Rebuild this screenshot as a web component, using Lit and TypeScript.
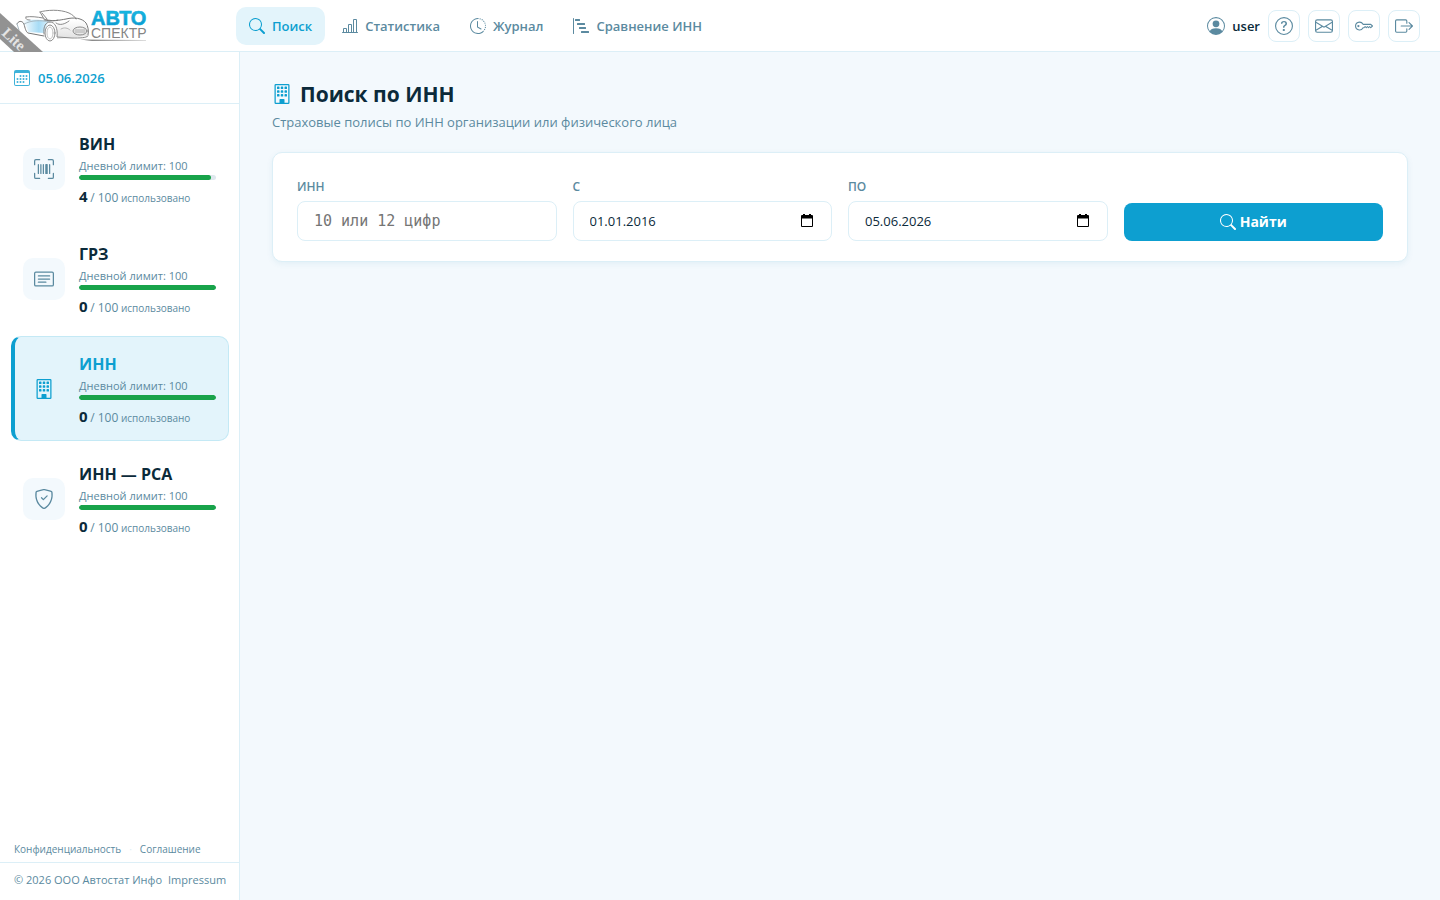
import { LitElement, html, css, svg } from "lit";
import { customElement, property } from "lit/decorators.js";

const windows = [2, 5, 8]
  .flatMap((y) => [4, 7, 10].map((x) => `M${x} ${y + 0.5}a.5.5 0 0 1 .5-.5h1a.5.5 0 0 1 .5.5v1a.5.5 0 0 1-.5.5h-1a.5.5 0 0 1-.5-.5z`))
  .join("");

const ICONS: Record<string, string[]> = {
  search: ["M11.742 10.344a6.5 6.5 0 1 0-1.397 1.398h-.001q.044.06.098.115l3.85 3.85a1 1 0 0 0 1.415-1.414l-3.85-3.85a1 1 0 0 0-.115-.1zM12 6.5a5.5 5.5 0 1 1-11 0 5.5 5.5 0 0 1 11 0"],
  chart: ["M11 2a1 1 0 0 1 1-1h2a1 1 0 0 1 1 1v12h.5a.5.5 0 0 1 0 1H.5a.5.5 0 0 1 0-1H1v-3a1 1 0 0 1 1-1h2a1 1 0 0 1 1 1v3h1V7a1 1 0 0 1 1-1h2a1 1 0 0 1 1 1v7h1zm1 12h2V2h-2zm-3 0V7H7v7zm-5 0v-3H2v3z"],
  history: [
    "M8.515 1.019A7 7 0 0 0 8 1V0a8 8 0 0 1 .589.022zm2.004.45a7 7 0 0 0-.985-.299l.219-.976q.576.129 1.126.342zm1.37.71a7 7 0 0 0-.439-.27l.493-.87a8 8 0 0 1 .979.654l-.615.789a7 7 0 0 0-.418-.302zm1.834 1.79a7 7 0 0 0-.653-.796l.724-.69q.406.429.747.91zm.744 1.352a7 7 0 0 0-.214-.468l.893-.45a8 8 0 0 1 .45 1.088l-.95.313a7 7 0 0 0-.179-.483m.53 2.507a7 7 0 0 0-.1-1.025l.985-.17q.1.58.116 1.17zm-.131 1.538q.05-.254.081-.51l.993.123a8 8 0 0 1-.23 1.155l-.964-.267q.069-.247.12-.501m-.952 2.379q.276-.436.486-.908l.914.405q-.24.54-.555 1.038zm-.964 1.205q.183-.183.35-.378l.758.653a8 8 0 0 1-.401.432z",
    "M8 1a7 7 0 1 0 4.95 11.95l.707.707A8.001 8.001 0 1 1 8 0z",
    "M7.5 3a.5.5 0 0 1 .5.5v5.21l3.248 1.856a.5.5 0 0 1-.496.868l-3.5-2A.5.5 0 0 1 7 9V3.5a.5.5 0 0 1 .5-.5",
  ],
  steps: ["M.5 0a.5.5 0 0 1 .5.5v15a.5.5 0 0 1-1 0V.5A.5.5 0 0 1 .5 0M2 1.5a.5.5 0 0 1 .5-.5h4a.5.5 0 0 1 .5.5v1a.5.5 0 0 1-.5.5h-4a.5.5 0 0 1-.5-.5zm2 4a.5.5 0 0 1 .5-.5h7a.5.5 0 0 1 .5.5v1a.5.5 0 0 1-.5.5h-7a.5.5 0 0 1-.5-.5zm2 4a.5.5 0 0 1 .5-.5h6a.5.5 0 0 1 .5.5v1a.5.5 0 0 1-.5.5h-6a.5.5 0 0 1-.5-.5zm2 4a.5.5 0 0 1 .5-.5h7a.5.5 0 0 1 .5.5v1a.5.5 0 0 1-.5.5h-7a.5.5 0 0 1-.5-.5z"],
  person: [
    "M11 6a3 3 0 1 1-6 0 3 3 0 0 1 6 0",
    "M0 8a8 8 0 1 1 16 0A8 8 0 0 1 0 8m8-7a7 7 0 0 0-5.468 11.37C3.242 11.226 4.805 10 8 10s4.757 1.225 5.468 2.37A7 7 0 0 0 8 1",
  ],
  question: [
    "M8 15A7 7 0 1 1 8 1a7 7 0 0 1 0 14m0 1A8 8 0 1 0 8 0a8 8 0 0 0 0 16",
    "M5.255 5.786a.237.237 0 0 0 .241.247h.825c.138 0 .248-.113.266-.25.09-.656.54-1.134 1.342-1.134.686 0 1.314.343 1.314 1.168 0 .635-.374.927-.965 1.371-.673.489-1.206 1.06-1.168 1.987l.003.217a.25.25 0 0 0 .25.246h.811a.25.25 0 0 0 .25-.25v-.105c0-.718.273-.927 1.01-1.486.609-.463 1.244-.977 1.244-2.056 0-1.511-1.276-2.241-2.673-2.241-1.267 0-2.655.59-2.75 2.286m1.557 5.763c0 .533.425.927 1.01.927.609 0 1.028-.394 1.028-.927 0-.552-.42-.94-1.029-.94-.584 0-1.009.388-1.009.94",
  ],
  envelope: ["M0 4a2 2 0 0 1 2-2h12a2 2 0 0 1 2 2v8a2 2 0 0 1-2 2H2a2 2 0 0 1-2-2zm2-1a1 1 0 0 0-1 1v.217l7 4.2 7-4.2V4a1 1 0 0 0-1-1zm13 2.383-4.708 2.825L15 11.105zm-.034 6.876-5.64-3.471L8 9.583l-1.326-.795-5.64 3.47A1 1 0 0 0 2 13h12a1 1 0 0 0 .966-.741M1 11.105l4.708-2.897L1 5.383z"],
  key: [
    "M0 8a4 4 0 0 1 7.465-2H14a.5.5 0 0 1 .354.146l1.5 1.5a.5.5 0 0 1 0 .708l-1.5 1.5a.5.5 0 0 1-.708 0L13 9.207l-.646.647a.5.5 0 0 1-.708 0L11 9.207l-.646.647a.5.5 0 0 1-.708 0L9 9.207l-.646.647A.5.5 0 0 1 8 10h-.535A4 4 0 0 1 0 8m4-3a3 3 0 1 0 2.712 4.285A.5.5 0 0 1 7.163 9h.63l.853-.854a.5.5 0 0 1 .708 0l.646.647.646-.647a.5.5 0 0 1 .708 0l.646.647.646-.647a.5.5 0 0 1 .708 0l.646.647.793-.793-1-1h-6.63a.5.5 0 0 1-.451-.285A3 3 0 0 0 4 5",
    "M4 8a1 1 0 1 1-2 0 1 1 0 0 1 2 0",
  ],
  exit: [
    "M10 12.5a.5.5 0 0 1-.5.5h-8a.5.5 0 0 1-.5-.5v-9a.5.5 0 0 1 .5-.5h8a.5.5 0 0 1 .5.5v2a.5.5 0 0 0 1 0v-2A1.5 1.5 0 0 0 9.5 2h-8A1.5 1.5 0 0 0 0 3.5v9A1.5 1.5 0 0 0 1.5 14h8a1.5 1.5 0 0 0 1.5-1.5v-2a.5.5 0 0 0-1 0z",
    "M15.854 8.354a.5.5 0 0 0 0-.708l-3-3a.5.5 0 0 0-.708.708L14.293 7.5H5.5a.5.5 0 0 0 0 1h8.793l-2.147 2.146a.5.5 0 0 0 .708.708z",
  ],
  calendar: [
    "M14 0H2a2 2 0 0 0-2 2v12a2 2 0 0 0 2 2h12a2 2 0 0 0 2-2V2a2 2 0 0 0-2-2M1 3.857C1 3.384 1.448 3 2 3h12c.552 0 1 .384 1 .857v10.286c0 .473-.448.857-1 .857H2c-.552 0-1-.384-1-.857z",
    "M6.5 7a1 1 0 1 0 0-2 1 1 0 0 0 0 2m3 0a1 1 0 1 0 0-2 1 1 0 0 0 0 2m3 0a1 1 0 1 0 0-2 1 1 0 0 0 0 2m-9 3a1 1 0 1 0 0-2 1 1 0 0 0 0 2m3 0a1 1 0 1 0 0-2 1 1 0 0 0 0 2m3 0a1 1 0 1 0 0-2 1 1 0 0 0 0 2m3 0a1 1 0 1 0 0-2 1 1 0 0 0 0 2m-9 3a1 1 0 1 0 0-2 1 1 0 0 0 0 2m3 0a1 1 0 1 0 0-2 1 1 0 0 0 0 2m3 0a1 1 0 1 0 0-2 1 1 0 0 0 0 2",
  ],
  barcode: ["M1.5 1a.5.5 0 0 0-.5.5v3a.5.5 0 0 1-1 0v-3A1.5 1.5 0 0 1 1.5 0h3a.5.5 0 0 1 0 1zM11 .5a.5.5 0 0 1 .5-.5h3A1.5 1.5 0 0 1 16 1.5v3a.5.5 0 0 1-1 0v-3a.5.5 0 0 0-.5-.5h-3a.5.5 0 0 1-.5-.5M.5 11a.5.5 0 0 1 .5.5v3a.5.5 0 0 0 .5.5h3a.5.5 0 0 1 0 1h-3A1.5 1.5 0 0 1 0 14.5v-3a.5.5 0 0 1 .5-.5m15 0a.5.5 0 0 1 .5.5v3a1.5 1.5 0 0 1-1.5 1.5h-3a.5.5 0 0 1 0-1h3a.5.5 0 0 0 .5-.5v-3a.5.5 0 0 1 .5-.5M3 4.5a.5.5 0 0 1 1 0v7a.5.5 0 0 1-1 0zm2 0a.5.5 0 0 1 1 0v7a.5.5 0 0 1-1 0zm2 0a.5.5 0 0 1 1 0v7a.5.5 0 0 1-1 0zm2 0a.5.5 0 0 1 .5-.5h1a.5.5 0 0 1 .5.5v7a.5.5 0 0 1-.5.5h-1a.5.5 0 0 1-.5-.5zm3 0a.5.5 0 0 1 1 0v7a.5.5 0 0 1-1 0z"],
  card: [
    "M14.5 3a.5.5 0 0 1 .5.5v9a.5.5 0 0 1-.5.5h-13a.5.5 0 0 1-.5-.5v-9a.5.5 0 0 1 .5-.5zm-13-1A1.5 1.5 0 0 0 0 3.5v9A1.5 1.5 0 0 0 1.5 14h13a1.5 1.5 0 0 0 1.5-1.5v-9A1.5 1.5 0 0 0 14.5 2z",
    "M3 5.5a.5.5 0 0 1 .5-.5h9a.5.5 0 0 1 0 1h-9a.5.5 0 0 1-.5-.5M3 8a.5.5 0 0 1 .5-.5h9a.5.5 0 0 1 0 1h-9A.5.5 0 0 1 3 8m0 2.5a.5.5 0 0 1 .5-.5h6a.5.5 0 0 1 0 1h-6a.5.5 0 0 1-.5-.5",
  ],
  building: ["M2 1a1 1 0 0 1 1-1h10a1 1 0 0 1 1 1v14a1 1 0 0 1-1 1H3a1 1 0 0 1-1-1zm11 0H3v14h3v-2.5a.5.5 0 0 1 .5-.5h3a.5.5 0 0 1 .5.5V15h3z", windows],
  shield: [
    "M5.338 1.59a61 61 0 0 0-2.837.856.48.48 0 0 0-.328.39c-.554 4.157.726 7.19 2.253 9.188a10.7 10.7 0 0 0 2.287 2.233c.346.244.652.42.893.533q.18.085.293.118a1 1 0 0 0 .101.025 1 1 0 0 0 .1-.025q.114-.034.294-.118c.24-.113.547-.29.893-.533a10.7 10.7 0 0 0 2.287-2.233c1.527-1.997 2.807-5.031 2.253-9.188a.48.48 0 0 0-.328-.39c-.651-.213-1.75-.56-2.837-.855C9.552 1.29 8.531 1.067 8 1.067c-.53 0-1.552.223-2.662.524zM5.072.56C6.157.265 7.31 0 8 0s1.843.265 2.928.56c1.11.3 2.229.655 2.887.87a1.54 1.54 0 0 1 1.044 1.262c.596 4.477-.787 7.795-2.465 9.99a11.8 11.8 0 0 1-2.517 2.453 7 7 0 0 1-1.048.625c-.28.132-.581.24-.829.24s-.548-.108-.829-.24a7 7 0 0 1-1.048-.625 11.8 11.8 0 0 1-2.517-2.453C1.928 10.487.545 7.169 1.141 2.692A1.54 1.54 0 0 1 2.185 1.43 63 63 0 0 1 5.072.56",
    "M10.854 5.146a.5.5 0 0 1 0 .708l-3 3a.5.5 0 0 1-.708 0l-1.5-1.5a.5.5 0 1 1 .708-.708L7.5 7.793l2.646-2.647a.5.5 0 0 1 .708 0",
  ],
  picker: ["M4 1h2v1h4V1h2v1h1a1 1 0 0 1 1 1v10a1 1 0 0 1-1 1H3a1 1 0 0 1-1-1V3a1 1 0 0 1 1-1h1zM3 5.500v7.500h10V5.500z"],
};

@customElement("ui-icon")
class UiIcon extends LitElement {
  @property() name = "";
  static styles = css`
    :host { display: inline-flex; flex: none; width: 16px; height: 16px; }
    svg { width: 100%; height: 100%; fill: currentColor; fill-rule: evenodd; }
  `;
  render() {
    return html`<svg viewBox="0 0 16 16" aria-hidden="true">${(ICONS[this.name] ?? []).map((d) => svg`<path d=${d}></path>`)}</svg>`;
  }
}

@customElement("brand-logo")
class BrandLogo extends LitElement {
  static styles = css`
    :host { display: block; width: 160px; height: 52px; }
    svg { display: block; width: 160px; height: 52px; }
    .name { font: bold 20px "Liberation Sans", sans-serif; }
    .sub { font: 14px "Liberation Sans", sans-serif; fill: #858585; }
    .lite { font: bold 15px "Liberation Serif", serif; fill: #e4e4e4; }
  `;
  render() {
    return html`<svg viewBox="0 0 160 52" role="img" aria-label="Автоспектр Lite">
      <defs>
        <linearGradient id="sky" x1="0" y1="0" x2="0" y2="1"><stop offset="0" stop-color="#19c0e6"></stop><stop offset="1" stop-color="#0a92cc"></stop></linearGradient>
        <linearGradient id="tint" x1="0" y1="0" x2="1" y2="0"><stop offset="0" stop-color="#ffffff"></stop><stop offset=".6" stop-color="#a6dbf5"></stop><stop offset="1" stop-color="#e4f4fc"></stop></linearGradient>
        <linearGradient id="metal" x1="0" y1="0" x2="0" y2="1"><stop offset="0" stop-color="#ffffff"></stop><stop offset="1" stop-color="#e0e0e0"></stop></linearGradient>
        <linearGradient id="swoosh" x1="0" y1="0" x2="1" y2="0"><stop offset="0" stop-color="#777777"></stop><stop offset="1" stop-color="#dddddd"></stop></linearGradient>
      </defs>
      <path d="M22 21C30 19 40 20 50 21C47 23 45 28 44 33L28 32C27 27 25 23 22 21z" fill="url(#tint)"></path>
      <path d="M57 24C66 20 78 18 84 22L88 29 87 36 57 39z" fill="url(#metal)"></path>
      <g fill="none" stroke="#8b8b8b" stroke-linecap="round">
        <path d="M40 12C46 10 60 9 69 13C73 15 75 17 76 19"></path>
        <path d="M40 12L44 19C50 21 55 21 58 20M42 13L47 19"></path>
        <path d="M26 17C31 16 37 17 43 18M26 17C25 19 27 20 30 20"></path>
        <path d="M44 20C52 22 60 20 66 19C74 17 82 18 86 23C88 26 89 31 88 35" stroke="#777777"></path>
        <path d="M56 23C60 26 65 24 69 21"></path>
        <path d="M17 24C18 21 22 20 24 24C25 28 26 32 28 33L44 36" stroke="#777777"></path>
        <path d="M17 24L19 30M24 24C32 20 40 20 50 22" stroke="#a9b9c2"></path>
        <path d="M44 34C43 26 46 22 50 22C55 22 58 28 57 37L72 38C80 38 86 38 88 36"></path>
        <ellipse cx="50" cy="33" rx="5" ry="8"></ellipse>
        <ellipse cx="50" cy="33" rx="3" ry="6" stroke="#c4c4c4"></ellipse>
        <ellipse cx="80" cy="31" rx="7" ry="4"></ellipse>
        <path d="M75 30H85M75 32H85" stroke="#aaaaaa"></path>
        <path d="M61 29C64 27 68 28 70 30" stroke="#b5b5b5"></path>
      </g>
      <path d="M80 39.500L146 40 146 41 92 41z" fill="url(#swoosh)"></path>
      <text class="name" x="91" y="25" fill="url(#sky)" stroke="#12a9d8" stroke-width=".6">АВТО</text>
      <text class="sub" x="91" y="38">СПЕКТР</text>
      <path d="M0 13L43 52H14L0 39z" fill="#929292"></path>
      <text class="lite" transform="translate(1 34) rotate(43)">Lite</text>
    </svg>`;
  }
}

const NAV = [
  { icon: "search", label: "Поиск", active: true },
  { icon: "chart", label: "Статистика" },
  { icon: "history", label: "Журнал" },
  { icon: "steps", label: "Сравнение ИНН" },
];
const ACTIONS = [
  { icon: "question", label: "Помощь" },
  { icon: "envelope", label: "Сообщения" },
  { icon: "key", label: "Сменить пароль" },
  { icon: "exit", label: "Выйти" },
];
const MODES = [
  { icon: "barcode", title: "ВИН", used: 4 },
  { icon: "card", title: "ГРЗ", used: 0 },
  { icon: "building", title: "ИНН", used: 0, active: true },
  { icon: "shield", title: "ИНН — РСА", used: 0 },
];
const LIMIT = 100;

@customElement("app-root")
class AppRoot extends LitElement {
  static styles = css`
    :host {
      --accent: #0d9fd0; --ink: #0b2a3a; --muted: #5b8aa0; --line: #dceff7; --soft: #e3f4fb; --page: #f3f9fd;
      display: grid; grid-template-rows: 52px 1fr; min-height: 100vh;
      background: var(--page); color: var(--ink);
      font: 14px/20px "Open Sans", "Noto Sans", sans-serif;
    }
    * { box-sizing: border-box; }
    a { color: inherit; text-decoration: none; }
    h1, p { margin: 0; }
    header { display: flex; align-items: center; background: #fff; border-bottom: 1px solid var(--line); padding-right: 20px; }
    .brand { width: 236px; height: 52px; }
    nav { display: flex; gap: 4px; }
    .tab { display: flex; align-items: center; gap: 7px; height: 38px; padding: 0 13px; border-radius: 10px; color: var(--muted); font-size: 13px; font-weight: 600; }
    .tab.active { background: var(--soft); color: var(--accent); }
    .tools { display: flex; align-items: center; gap: 8px; margin-left: auto; color: var(--muted); }
    .tools ui-icon { width: 18px; height: 18px; }
    .user { display: flex; align-items: center; gap: 7px; color: var(--ink); font-size: 13px; font-weight: 600; }
    .user ui-icon { color: var(--muted); }
    .tool { display: grid; place-items: center; width: 32px; height: 32px; padding: 0; border: 1px solid var(--line); border-radius: 8px; background: #fff; color: var(--muted); }
    .body { display: grid; grid-template-columns: 240px 1fr; }
    aside { display: flex; flex-direction: column; background: #fff; border-right: 1px solid var(--line); }
    .date { display: flex; align-items: center; gap: 8px; height: 52px; padding: 0 14px; border-bottom: 1px solid var(--line); color: var(--accent); font-size: 13px; font-weight: 600; }
    .date ui-icon { opacity: .8; }
    .modes { display: flex; flex-direction: column; gap: 5px; padding: 12px 10px 0 11px; }
    .mode { display: grid; grid-template-columns: 42px 1fr; align-items: center; gap: 14px; height: 105px; padding: 0 12px 0 8px; border: 1px solid transparent; border-left: 4px solid transparent; border-radius: 10px; }
    .mode.active { background: var(--soft); border-color: #c4e9f5; border-left-color: var(--accent); }
    .badge { display: grid; place-items: center; width: 42px; height: 42px; border-radius: 10px; background: var(--page); color: var(--muted); }
    .badge ui-icon { width: 20px; height: 20px; }
    .active .badge { background: none; color: var(--accent); }
    .info { padding-top: 5px; }
    .title { font-size: 16px; line-height: 24px; font-weight: 700; }
    .active .title { color: var(--accent); }
    .limit { font-size: 11px; line-height: 19px; color: var(--muted); }
    .track { height: 5px; border-radius: 3px; background: #dfe8ee; overflow: hidden; }
    .fill { height: 5px; border-radius: 3px; background: #18a34a; }
    .usage { margin-top: 4px; line-height: 24px; font-size: 10px; color: var(--muted); }
    .usage b { font-size: 15px; color: var(--ink); }
    .usage span { font-size: 12px; font-weight: 500; }
    .legal { display: flex; gap: 8px; margin-top: auto; padding: 0 14px; height: 26px; line-height: 24px; border-bottom: 1px solid var(--line); font-size: 10px; color: var(--muted); }
    .dot { color: var(--line); }
    .copy { display: flex; gap: 6px; height: 37px; padding: 0 14px; line-height: 34px; font-size: 11px; color: var(--muted); white-space: nowrap; }
    main { padding: 28px 32px; }
    .head { display: flex; align-items: center; gap: 8px; }
    .head ui-icon { width: 20px; height: 20px; color: var(--accent); }
    h1 { font-size: 21px; line-height: 28px; font-weight: 700; }
    .lead { margin-top: 4px; font-size: 13px; color: var(--muted); }
    form { display: grid; grid-template-columns: repeat(4, 1fr); align-items: end; gap: 16px; margin-top: 20px; padding: 24px 24px 20px; border: 1px solid var(--line); border-radius: 10px; background: #fff; box-shadow: 0 2px 6px rgba(13, 120, 160, .07); }
    .field { display: grid; gap: 4px; }
    label { font-size: 12px; line-height: 20px; font-weight: 600; color: var(--muted); text-transform: uppercase; }
    .box { display: flex; align-items: center; height: 40px; padding: 0 16px; border: 1px solid var(--line); border-radius: 8px; background: #fff; }
    input { flex: 1; min-width: 0; padding: 0; border: 0; outline: 0; background: none; color: var(--ink); font: 13px/20px "Open Sans", "Noto Sans", sans-serif; }
    .mono { font: 15px/20px "DejaVu Sans Mono", monospace; }
    .mono::placeholder { color: #757575; opacity: 1; }
    .pick { display: grid; place-items: center; padding: 0; border: 0; background: none; color: #000; }
    .submit { display: flex; align-items: center; justify-content: center; gap: 4px; height: 38px; border: 0; border-radius: 8px; background: var(--accent); color: #fff; font: 700 14px/20px "Open Sans", "Noto Sans", sans-serif; }
  `;

  private dateField(id: string, label: string, value: string) {
    return html`<div class="field">
      <label for=${id}>${label}</label>
      <div class="box"><input id=${id} type="text" .value=${value} /><button class="pick" type="button" aria-label="Выбрать дату"><ui-icon name="picker"></ui-icon></button></div>
    </div>`;
  }

  render() {
    return html`
      <header>
        <a class="brand" href="#"><brand-logo></brand-logo></a>
        <nav>${NAV.map((n) => html`<a class="tab ${n.active ? "active" : ""}" href="#"><ui-icon name=${n.icon}></ui-icon>${n.label}</a>`)}</nav>
        <div class="tools">
          <div class="user"><ui-icon name="person"></ui-icon>user</div>
          ${ACTIONS.map((a) => html`<button class="tool" aria-label=${a.label}><ui-icon name=${a.icon}></ui-icon></button>`)}
        </div>
      </header>
      <div class="body">
        <aside>
          <div class="date"><ui-icon name="calendar"></ui-icon>05.06.2026</div>
          <div class="modes">
            ${MODES.map((m) => html`<a class="mode ${m.active ? "active" : ""}" href="#">
              <div class="badge"><ui-icon name=${m.icon}></ui-icon></div>
              <div class="info">
                <div class="title">${m.title}</div>
                <div class="limit">Дневной лимит: ${LIMIT}</div>
                <div class="track"><div class="fill" style="width:${LIMIT - m.used}%"></div></div>
                <div class="usage"><b>${m.used}</b> <span>/ ${LIMIT}</span> использовано</div>
              </div>
            </a>`)}
          </div>
          <div class="legal"><a href="#">Конфиденциальность</a><span class="dot">·</span><a href="#">Соглашение</a></div>
          <div class="copy"><span>© 2026 ООО Автостат Инфо</span><a href="#">Impressum</a></div>
        </aside>
        <main>
          <div class="head"><ui-icon name="building"></ui-icon><h1>Поиск по ИНН</h1></div>
          <p class="lead">Страховые полисы по ИНН организации или физического лица</p>
          <form @submit=${(e: Event) => e.preventDefault()}>
            <div class="field">
              <label for="inn">ИНН</label>
              <div class="box"><input class="mono" id="inn" type="text" placeholder="10 или 12 цифр" /></div>
            </div>
            ${this.dateField("from", "С", "01.01.2016")}
            ${this.dateField("to", "По", "05.06.2026")}
            <button class="submit" type="submit"><ui-icon name="search"></ui-icon>Найти</button>
          </form>
        </main>
      </div>
    `;
  }
}
